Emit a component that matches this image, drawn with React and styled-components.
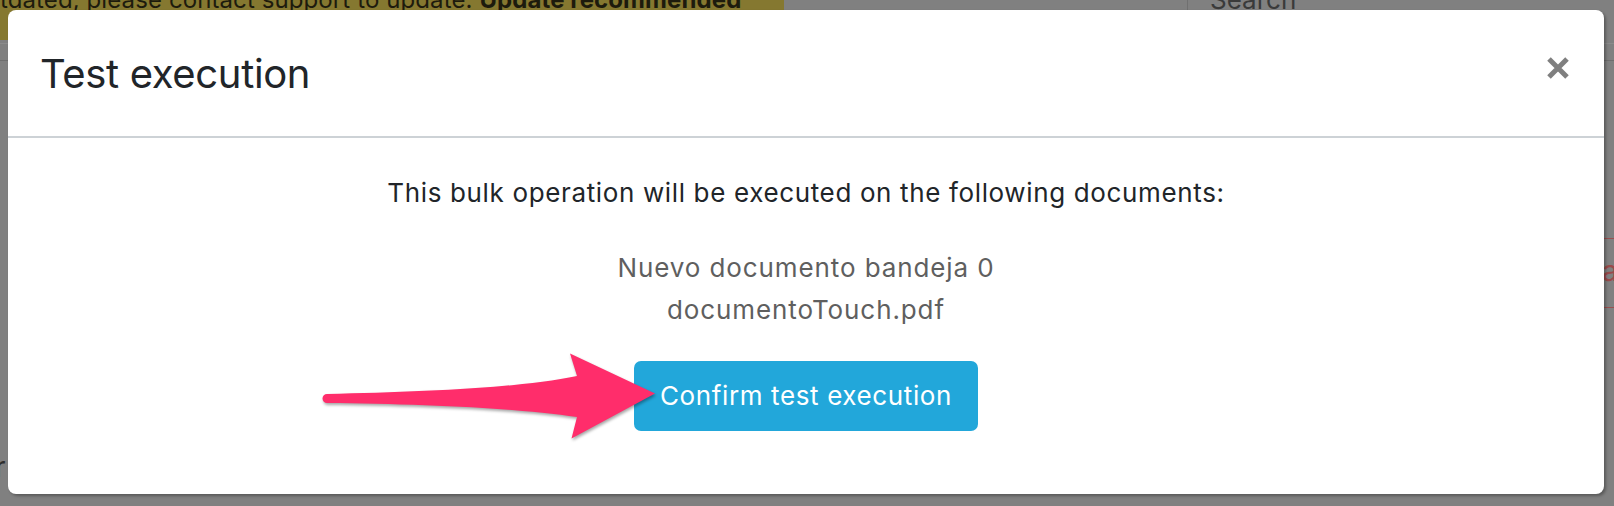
import React from "react";
import styled, { createGlobalStyle } from "styled-components";

const GlobalStyle = createGlobalStyle`
  html, body { margin: 0; padding: 0; background: #808080; }
  body {
    width: 1614px;
    height: 506px;
    overflow: hidden;
    font-family: Inter, "Noto Sans", sans-serif;
  }
  * { box-sizing: border-box; }
`;

const Page = styled.div`
  position: relative;
  width: 1614px;
  height: 506px;
  overflow: hidden;
  background: #808080;
`;

/* ---------- dimmed page behind the modal ---------- */
const Backdrop = styled.div`
  display: flex;
  flex-direction: column;
  width: 100%;
  height: 100%;
`;

const TopRow = styled.div`
  display: flex;
  height: 44px;
  border-bottom: 1px solid #8b8b8b;
`;

const Banner = styled.div`
  width: 784px;
  height: 40px;
  background: #857830;
  overflow: hidden;
  display: flex;
  align-items: flex-start;
`;

const BannerText = styled.span`
  margin-top: -12px;
  font-size: 24px;
  line-height: 24px;
  letter-spacing: 0.1px;
  color: #1d1b0d;
  white-space: nowrap;
  & b { font-weight: 700; }
`;

const SearchBox = styled.div`
  margin-left: 403px;
  width: 420px;
  height: 43px;
  border-left: 1px solid #707070;
  padding-left: 22px;
  overflow: hidden;
`;

const SearchText = styled.span`
  display: block;
  margin-top: -18px;
  font-size: 26px;
  line-height: 36px;
  color: #3a3a3a;
`;

const SubNav = styled.div`
  height: 17px;
  border-bottom: 1px solid #6e6e6e;
`;

const Content = styled.div`
  flex: 1;
  display: flex;
  flex-direction: column;
`;

const AlertRow = styled.div`
  margin-top: 177px;
  align-self: flex-end;
  width: 40px;
  height: 70px;
  border-top: 1px solid #9a5050;
  border-bottom: 1px solid #9a5050;
  padding-left: 28px;
  font-size: 29px;
  line-height: 64px;
  color: #9a4a4a;
  overflow: hidden;
`;

const BottomText = styled.div`
  margin-top: auto;
  margin-bottom: 19px;
  margin-left: -5px;
  font-size: 28px;
  line-height: 40px;
  color: #2e2e2e;
`;

/* ---------- modal ---------- */
const Modal = styled.div`
  position: absolute;
  left: 8px;
  top: 10px;
  width: 1596px;
  height: 484px;
  background: #ffffff;
  border-radius: 8px;
  box-shadow: 2px 2px 3px rgba(0, 0, 0, 0.3);
  display: flex;
  flex-direction: column;
`;

const Header = styled.div`
  display: flex;
  align-items: center;
  justify-content: space-between;
  height: 128px;
  padding: 2px 35px 0 32px;
  border-bottom: 2px solid #cdd2d6;
`;

const Title = styled.h5`
  margin: 0;
  font-size: 40px;
  font-weight: 400;
  line-height: 48px;
  letter-spacing: -0.35px;
  color: #212529;
`;

const CloseButton = styled.button`
  align-self: flex-start;
  margin-top: 45px;
  padding: 0;
  border: none;
  background: none;
  display: flex;
  cursor: pointer;
`;

const Body = styled.div`
  flex: 1;
  display: flex;
  flex-direction: column;
  align-items: center;
  padding-top: 37px;
  text-align: center;
`;

const Intro = styled.p`
  margin: 0;
  font-size: 26px;
  line-height: 36px;
  letter-spacing: 0.64px;
  color: #212529;
`;

const DocList = styled.div`
  margin-top: 36px;
  font-size: 26px;
  line-height: 42px;
  letter-spacing: 0.9px;
  color: #5f5f5f;
`;

const ConfirmButton = styled.button`
  margin-top: 30px;
  height: 70px;
  padding: 0 26px;
  border: none;
  border-radius: 7px;
  background: #22a7da;
  color: #ffffff;
  font-family: inherit;
  font-size: 26px;
  line-height: 36px;
  letter-spacing: 0.62px;
  cursor: pointer;
`;

const ArrowSvg = styled.svg`
  position: absolute;
  left: 318px;
  top: 346px;
  overflow: visible;
  filter: drop-shadow(1px 2px 1.5px rgba(0, 0, 0, 0.35));
`;

const docs = ["Nuevo documento bandeja 0", "documentoTouch.pdf"];

export default function App() {
  return (
    <>
      <GlobalStyle />
      <Page>
        <Backdrop>
          <TopRow>
            <Banner>
              <BannerText>
                tdated, please contact support to update. <b>Update recommended</b>
              </BannerText>
            </Banner>
            <SearchBox>
              <SearchText>Search</SearchText>
            </SearchBox>
          </TopRow>
          <SubNav />
          <Content>
            <AlertRow>a</AlertRow>
            <BottomText>r</BottomText>
          </Content>
        </Backdrop>

        <Modal>
          <Header>
            <Title>Test execution</Title>
            <CloseButton aria-label="Close">
              <svg width="22" height="22" viewBox="0 0 22 22">
                <path d="M2 2 L20 20 M20 2 L2 20" stroke="#7f7f7f" strokeWidth="5" />
              </svg>
            </CloseButton>
          </Header>
          <Body>
            <Intro>This bulk operation will be executed on the following documents:</Intro>
            <DocList>
              {docs.map((d) => (
                <div key={d}>{d}</div>
              ))}
            </DocList>
            <ConfirmButton>Confirm test execution</ConfirmButton>
          </Body>
        </Modal>

        <ArrowSvg width="345" height="98" viewBox="318 346 345 98">
          <path
            d="M327 394 C420 392 520 388 577 376 L570 353.5 L655 393.5 L571.5 438.5 L577 417 C520 408 420 404 327 403 A4.5 4.5 0 0 1 327 394 Z"
            fill="#ff2d6b"
          />
        </ArrowSvg>
      </Page>
    </>
  );
}
